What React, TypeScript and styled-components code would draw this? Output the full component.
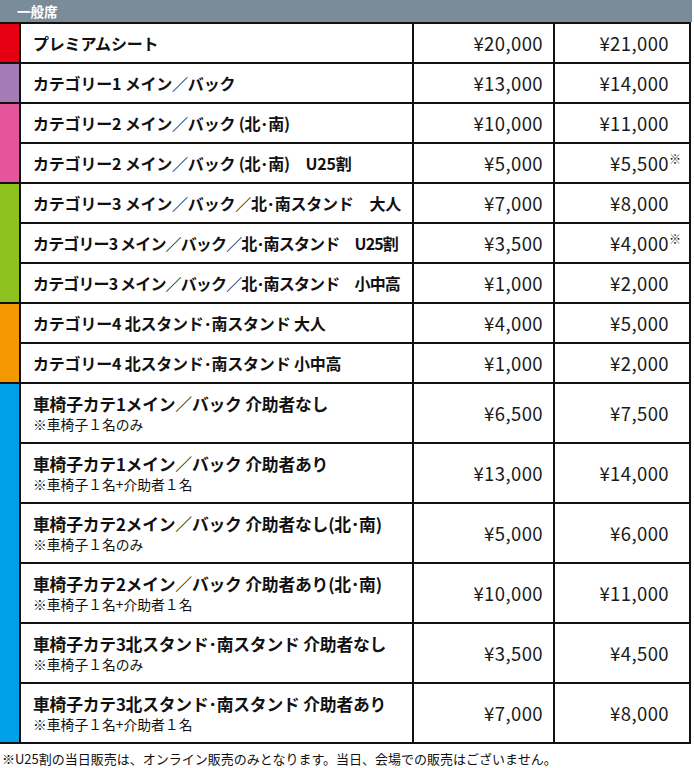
import styled, { createGlobalStyle } from "styled-components";

const GlobalStyle = createGlobalStyle`
	body {
		margin: 0;
		background: #fff;
		font-family: "Noto Sans CJK JP", "Noto Sans", sans-serif;
		color: #111;
	}
`;

const Page = styled.div`
	width: 690px;
`;

const SectionHeader = styled.div`
	height: 22px;
	width: 692px;
	background: #7a8c99;
	color: #fff;
	font-size: 13.5px;
	font-weight: 700;
	line-height: 22px;
	padding-left: 17px;
	box-sizing: border-box;
`;

const PriceTable = styled.table`
	width: 690px;
	border-collapse: collapse;
	table-layout: fixed;
`;

const ColorCell = styled.td<{ $color: string }>`
	padding: 0;
	background: ${(p) => p.$color};
	border-top: 2px solid #111;
	border-bottom: 2px solid #111;
	border-right: 2px solid #111;
`;

const NameCell = styled.td<{ $tall?: boolean }>`
	height: ${(p) => (p.$tall ? "60px" : "40px")};
	padding: 0 0 0 12px;
	border: 2px solid #111;
	box-sizing: border-box;
	vertical-align: middle;
`;

const Name = styled.div<{ $large?: boolean; $tight?: boolean }>`
	font-size: ${(p) => (p.$large ? "16.8px" : "16px")};
	font-weight: 700;
	line-height: 20px;
	white-space: pre;
	letter-spacing: ${(p) => (p.$tight ? "-0.85px" : "-0.2px")};
`;

const Note = styled.div`
	margin-top: 2px;
	font-size: 13.8px;
	font-weight: 400;
	line-height: 16px;
	white-space: pre;
`;

const PriceCell = styled.td<{ $pad: number }>`
	padding: 0 ${(p) => p.$pad}px 0 0;
	border: 2px solid #111;
	text-align: right;
	font-size: 18.5px;
	letter-spacing: 0.4px;
	color: #1a1a1a;
	white-space: nowrap;
`;

const Mark = styled.span`
	display: inline-block;
	width: 0;
	font-size: 12px;
	vertical-align: 7px;
	letter-spacing: 0;
`;

const Footnote = styled.p`
	margin: 7px 0 0 2px;
	font-size: 13px;
	line-height: 15px;
	white-space: nowrap;
`;

interface Row {
	name: string;
	note?: string;
	regular: string;
	sameDay: string;
	mark?: boolean;
	tight?: boolean;
}

interface Group {
	color: string;
	rows: Row[];
}

const groups: Group[] = [
	{
		color: "#e60012",
		rows: [{ name: "プレミアムシート", regular: "¥20,000", sameDay: "¥21,000" }],
	},
	{
		color: "#a57bb5",
		rows: [{ name: "カテゴリー1 メイン／バック", regular: "¥13,000", sameDay: "¥14,000" }],
	},
	{
		color: "#e4559b",
		rows: [
			{ name: "カテゴリー2 メイン／バック (北･南)", regular: "¥10,000", sameDay: "¥11,000" },
			{ name: "カテゴリー2 メイン／バック (北･南)　U25割", regular: "¥5,000", sameDay: "¥5,500", mark: true },
		],
	},
	{
		color: "#8dc21f",
		rows: [
			{ name: "カテゴリー3 メイン／バック／北･南スタンド　大人", regular: "¥7,000", sameDay: "¥8,000" },
			{ name: "カテゴリー3 メイン／バック／北･南スタンド　U25割", regular: "¥3,500", sameDay: "¥4,000", mark: true, tight: true },
			{ name: "カテゴリー3 メイン／バック／北･南スタンド　小中高", regular: "¥1,000", sameDay: "¥2,000", tight: true },
		],
	},
	{
		color: "#f39800",
		rows: [
			{ name: "カテゴリー4 北スタンド･南スタンド 大人", regular: "¥4,000", sameDay: "¥5,000" },
			{ name: "カテゴリー4 北スタンド･南スタンド 小中高", regular: "¥1,000", sameDay: "¥2,000" },
		],
	},
	{
		color: "#00a0e9",
		rows: [
			{ name: "車椅子カテ1メイン／バック 介助者なし", note: "※車椅子１名のみ", regular: "¥6,500", sameDay: "¥7,500" },
			{ name: "車椅子カテ1メイン／バック 介助者あり", note: "※車椅子１名+介助者１名", regular: "¥13,000", sameDay: "¥14,000" },
			{ name: "車椅子カテ2メイン／バック 介助者なし(北･南)", note: "※車椅子１名のみ", regular: "¥5,000", sameDay: "¥6,000" },
			{ name: "車椅子カテ2メイン／バック 介助者あり(北･南)", note: "※車椅子１名+介助者１名", regular: "¥10,000", sameDay: "¥11,000" },
			{ name: "車椅子カテ3北スタンド･南スタンド 介助者なし", note: "※車椅子１名のみ", regular: "¥3,500", sameDay: "¥4,500" },
			{ name: "車椅子カテ3北スタンド･南スタンド 介助者あり", note: "※車椅子１名+介助者１名", regular: "¥7,000", sameDay: "¥8,000" },
		],
	},
];

const App = () => {
	return (
		<Page>
			<GlobalStyle />
			<SectionHeader>一般席</SectionHeader>
			<PriceTable>
				<colgroup>
					<col style={{ width: 20 }} />
					<col style={{ width: 393 }} />
					<col style={{ width: 141 }} />
					<col style={{ width: 136 }} />
				</colgroup>
				<tbody>
					{groups.map((group, gi) =>
						group.rows.map((row, ri) => (
							<tr key={`${gi}-${ri}`}>
								{ri === 0 && <ColorCell $color={group.color} rowSpan={group.rows.length} />}
								<NameCell $tall={!!row.note}>
									<Name $large={!!row.note} $tight={row.tight}>
										{row.name}
									</Name>
									{row.note && <Note>{row.note}</Note>}
								</NameCell>
								<PriceCell $pad={10}>{row.regular}</PriceCell>
								<PriceCell $pad={20}>
									{row.sameDay}
									{row.mark && <Mark>※</Mark>}
								</PriceCell>
							</tr>
						))
					)}
				</tbody>
			</PriceTable>
			<Footnote>※U25割の当日販売は、オンライン販売のみとなります。当日、会場での販売はございません。</Footnote>
		</Page>
	);
};

export default App;
